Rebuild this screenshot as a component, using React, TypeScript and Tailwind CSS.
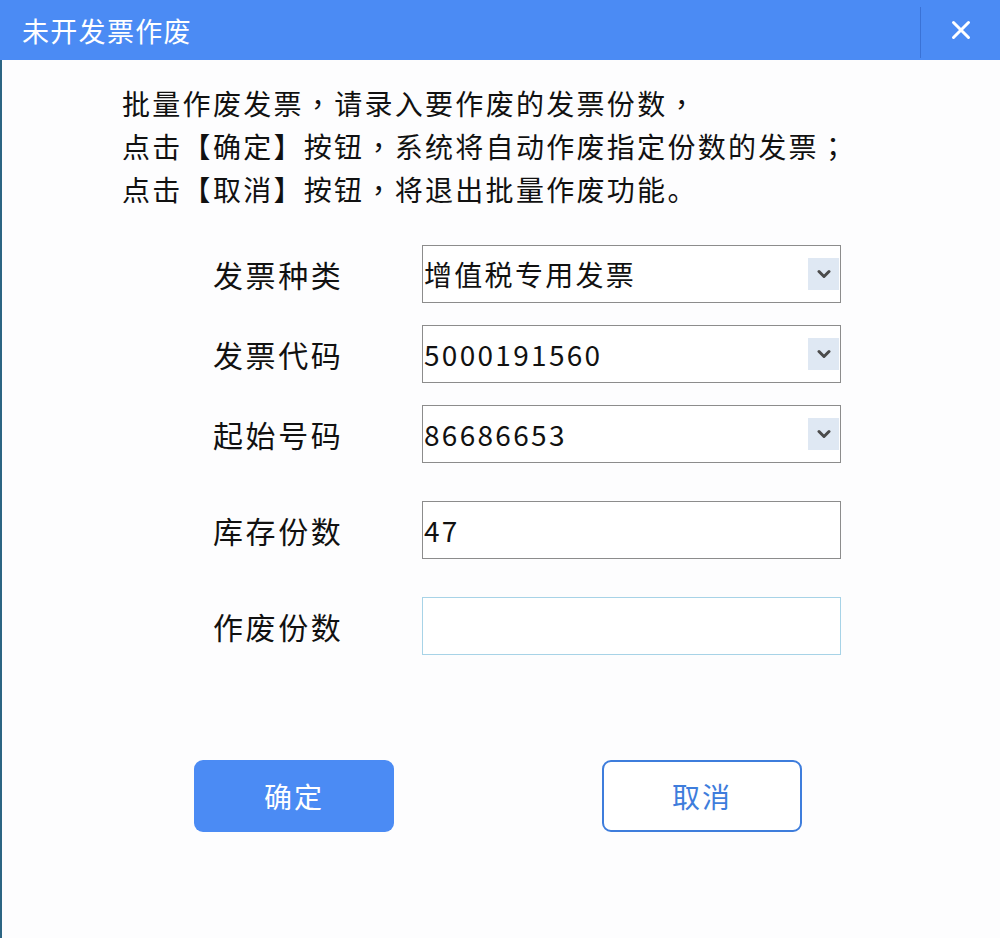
import React from "react";

// 未开发票作废 dialog

const FONT = { fontFamily: '"Noto Sans CJK SC", "Noto Sans", sans-serif' };
const TC = { fontFamily: '"Noto Sans CJK TC", "Noto Sans CJK SC", sans-serif' };

function Line({ text }: { text: string }) {
  return (
    <p>
      {text.split(/([，；])/).map((part, i) =>
        part === "，" || part === "；" ? (
          <span key={i} style={TC}>
            {part}
          </span>
        ) : (
          <React.Fragment key={i}>{part}</React.Fragment>
        )
      )}
    </p>
  );
}

function Chevron() {
  return (
    <div className="w-[31px] h-[32px] bg-[#dfe8f3] flex items-center justify-center mr-px">
      <svg width="14" height="10" viewBox="0 0 14 10">
        <polyline points="2,2.5 7,7.5 12,2.5" fill="none" stroke="#4b4b4b" strokeWidth="3" strokeLinecap="round" strokeLinejoin="round" />
      </svg>
    </div>
  );
}

function SelectBox({ value }: { value: string }) {
  return (
    <div className="w-[419px] h-[58px] border border-[#8c8c8c] bg-white flex items-center justify-between">
      <span className="text-[28px] tracking-[2.3px] text-[#111] pl-px leading-none">{value}</span>
      <Chevron />
    </div>
  );
}

function TextBox({ value, focus }: { value?: string; focus?: boolean }) {
  return (
    <div
      className={
        "w-[419px] h-[58px] border bg-white flex items-center " +
        (focus ? "border-[#a7d3e7]" : "border-[#8c8c8c]")
      }
    >
      <span className="text-[28px] tracking-[2.3px] text-[#111] pl-px leading-none">{value}</span>
    </div>
  );
}

const ROWS: { label: string; kind: "select" | "text"; value?: string; focus?: boolean; gap: string }[] = [
  { label: "发票种类", kind: "select", value: "增值税专用发票", gap: "mt-0" },
  { label: "发票代码", kind: "select", value: "5000191560", gap: "mt-[22px]" },
  { label: "起始号码", kind: "select", value: "86686653", gap: "mt-[22px]" },
  { label: "库存份数", kind: "text", value: "47", gap: "mt-[38px]" },
  { label: "作废份数", kind: "text", focus: true, gap: "mt-[38px]" },
];

export default function App() {
  return (
    <div className="w-[1000px] h-[938px] flex flex-col bg-[#fdfdfe] overflow-hidden" style={FONT}>
      {/* title bar */}
      <div className="h-[60px] bg-[#4b8bf4] flex items-center shrink-0">
        <div className="flex-1 pl-[22px] text-[27px] tracking-[1.3px] text-white leading-none">未开发票作废</div>
        <div className="w-px h-[51px] mt-[5px] bg-[#3a72d6]" />
        <div className="w-[79px] h-full flex items-center justify-center">
          <svg width="22" height="22" viewBox="0 0 22 22">
            <path d="M3.5 3.5 L18.5 18.5 M18.5 3.5 L3.5 18.5" stroke="#fff" strokeWidth="3" strokeLinecap="round" />
          </svg>
        </div>
      </div>

      {/* body */}
      <div className="flex-1 border-l-2 border-[#2c6583] flex flex-col">
        <div className="pl-[120px] pt-[22px] text-[28px] tracking-[2.3px] leading-[43px] text-[#111]">
          <Line text="批量作废发票，请录入要作废的发票份数，" />
          <Line text="点击【确定】按钮，系统将自动作废指定份数的发票；" />
          <Line text="点击【取消】按钮，将退出批量作废功能。" />
        </div>

        <div className="pl-[211px] mt-[34px] flex flex-col">
          {ROWS.map((r) => (
            <div key={r.label} className={"flex items-center " + r.gap}>
              <div className="w-[209px] text-[30px] tracking-[2.6px] text-[#111] leading-none">{r.label}</div>
              {r.kind === "select" ? <SelectBox value={r.value!} /> : <TextBox value={r.value} focus={r.focus} />}
            </div>
          ))}
        </div>

        <div className="pl-[192px] mt-[105px] flex gap-[208px]">
          <button className="w-[200px] h-[72px] rounded-[9px] bg-[#4b8bf4] text-white text-[28px] tracking-[2px]">
            确定
          </button>
          <button className="w-[200px] h-[72px] rounded-[9px] border-2 border-[#3e7ddc] bg-white text-[#3e7ddc] text-[28px] tracking-[2px]">
            取消
          </button>
        </div>
      </div>
    </div>
  );
}
